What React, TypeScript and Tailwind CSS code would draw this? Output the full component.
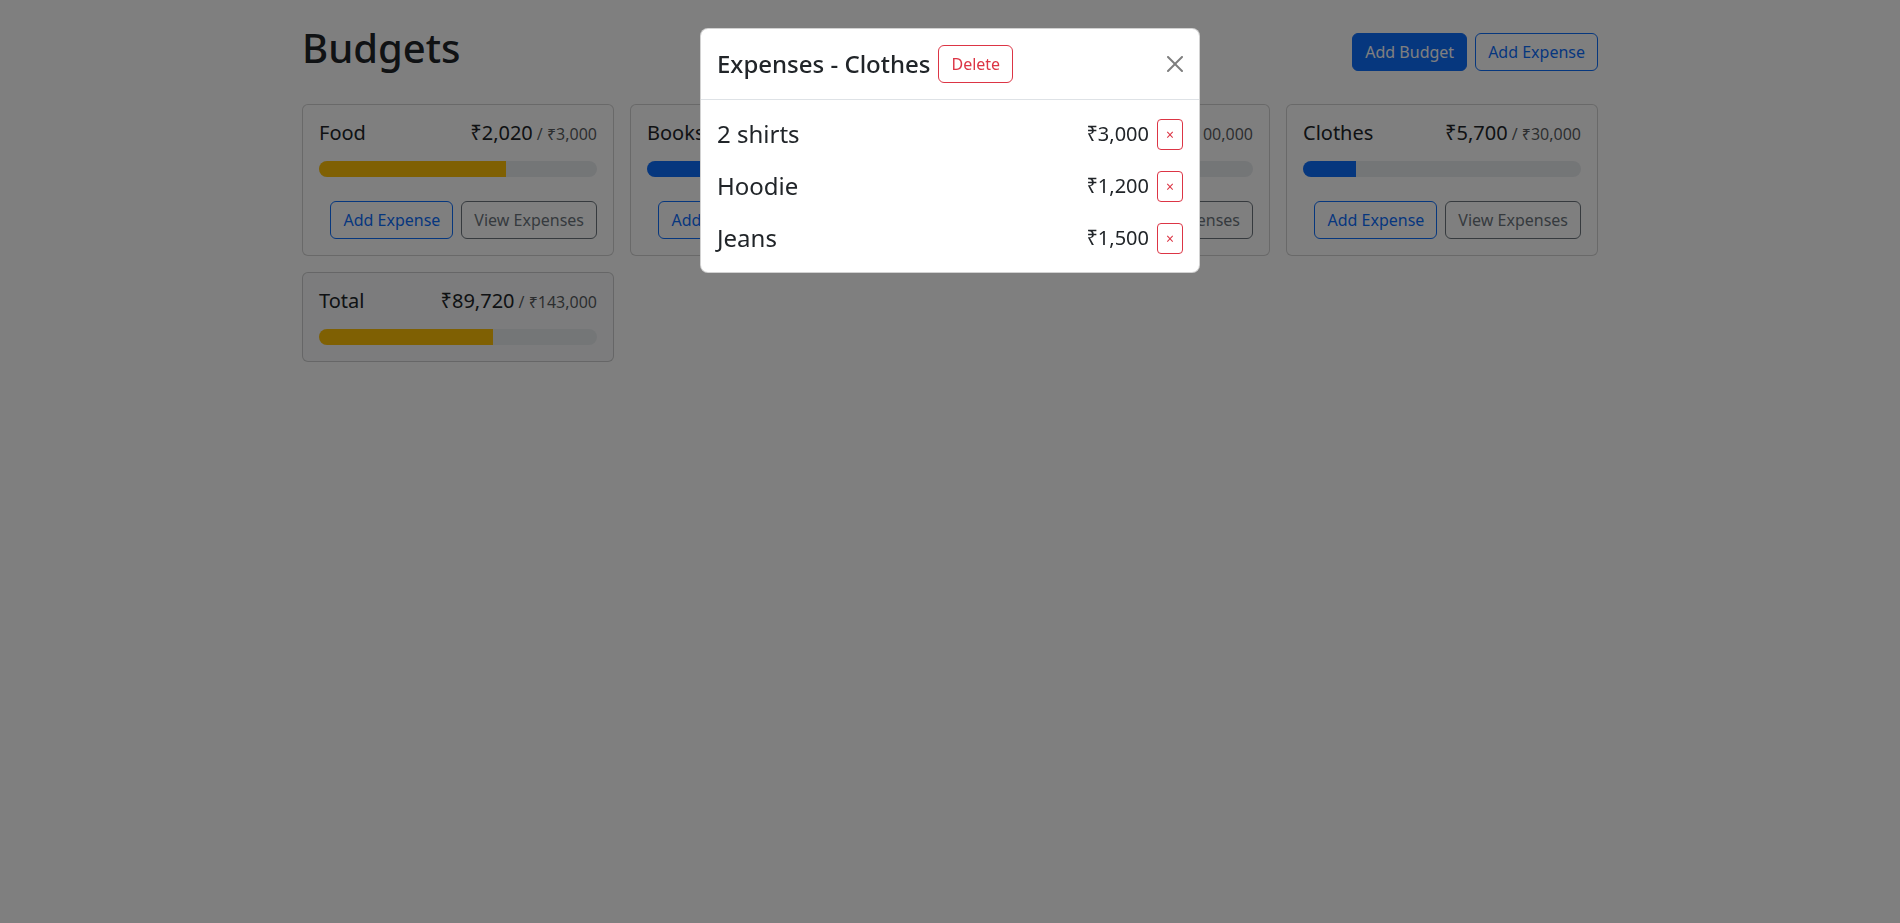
import React from 'react';

type Variant = 'primary' | 'warning' | 'danger';

type Budget = {
  name: string;
  amount: string;
  max: string;
  pct: number;
  variant: Variant;
};

const budgets: Budget[] = [
  { name: 'Food', amount: '₹2,020', max: '₹3,000', pct: 67.33, variant: 'warning' },
  { name: 'Books', amount: '₹4,500', max: '₹10,000', pct: 45, variant: 'primary' },
  { name: 'Rent', amount: '₹77,500', max: '₹100,000', pct: 77.5, variant: 'danger' },
  { name: 'Clothes', amount: '₹5,700', max: '₹30,000', pct: 19, variant: 'primary' },
];

const total: Budget = { name: 'Total', amount: '₹89,720', max: '₹143,000', pct: 62.74, variant: 'warning' };

const expenses = [
  { id: 1, description: '2 shirts', amount: '₹3,000' },
  { id: 2, description: 'Hoodie', amount: '₹1,200' },
  { id: 3, description: 'Jeans', amount: '₹1,500' },
];

const barColor: Record<Variant, string> = {
  primary: 'bg-[#0d6efd]',
  warning: 'bg-[#ffc107]',
  danger: 'bg-[#dc3545]',
};

const BudgetCard: React.FC<{ budget: Budget; gray?: boolean; hideButtons?: boolean }> = ({
  budget,
  gray,
  hideButtons,
}) => {
  return (
    <div className={`rounded-[6px] border border-black/[0.175] ${gray ? 'bg-[#f8f9fa]' : 'bg-white'}`}>
      <div className="p-4">
        {/* Title */}
        <div className="mb-4 flex items-baseline justify-between text-[20px] leading-[1.2]">
          <div className="mr-2">{budget.name}</div>
          <div className="flex items-baseline">
            {budget.amount}
            <span className="ml-1 text-base leading-[1.2] text-[#212529]/75">/ {budget.max}</span>
          </div>
        </div>

        {/* Progress */}
        <div className="flex h-4 overflow-hidden rounded-full bg-[#e9ecef]">
          <div className={barColor[budget.variant]} style={{ width: `${budget.pct}%` }} />
        </div>

        {!hideButtons && (
          <div className="mt-6 flex items-center gap-2">
            <button className="ml-auto rounded-[6px] border border-[#0d6efd] px-3 py-1.5 text-base leading-6 text-[#0d6efd]">
              Add Expense
            </button>
            <button className="rounded-[6px] border border-[#6c757d] px-3 py-1.5 text-base leading-6 text-[#6c757d]">
              View Expenses
            </button>
          </div>
        )}
      </div>
    </div>
  );
};

const App: React.FC = () => {
  return (
    <div className="relative min-h-screen bg-white font-['Noto_Sans',sans-serif] text-[#212529]">
      <div className="mx-auto w-[1320px] px-3 pt-6">
        {/* Header */}
        <div className="mb-6 flex items-center gap-2">
          <h1 className="mb-2 mr-auto text-[40px] font-medium leading-[1.2]">Budgets</h1>
          <button className="rounded-[6px] border border-[#0d6efd] bg-[#0d6efd] px-3 py-1.5 text-base leading-6 text-white">
            Add Budget
          </button>
          <button className="rounded-[6px] border border-[#0d6efd] px-3 py-1.5 text-base leading-6 text-[#0d6efd]">
            Add Expense
          </button>
        </div>

        {/* Cards */}
        <div className="grid grid-cols-4 items-start gap-4">
          {budgets.map((b) => (
            <BudgetCard key={b.name} budget={b} />
          ))}
          <BudgetCard budget={total} gray hideButtons />
        </div>
      </div>

      {/* Backdrop */}
      <div className="fixed inset-0 bg-black/50" />

      {/* Modal */}
      <div className="fixed inset-0">
        <div className="mx-auto mt-7 w-[500px] rounded-lg border border-black/[0.175] bg-white">
          <div className="flex items-center border-b border-[#dee2e6] p-4">
            <div className="flex items-center gap-2 text-2xl font-medium leading-normal">
              <div>Expenses - Clothes</div>
              <button className="rounded-[6px] border border-[#dc3545] px-3 py-1.5 text-base font-normal leading-6 text-[#dc3545]">
                Delete
              </button>
            </div>
            <button className="-m-2 ml-auto p-2 opacity-50" aria-label="Close">
              <svg viewBox="0 0 16 16" className="h-4 w-4" fill="#000">
                <path d="M.293.293a1 1 0 0 1 1.414 0L8 6.586 14.293.293a1 1 0 1 1 1.414 1.414L9.414 8l6.293 6.293a1 1 0 0 1-1.414 1.414L8 9.414l-6.293 6.293a1 1 0 0 1-1.414-1.414L6.586 8 .293 1.707a1 1 0 0 1 0-1.414z" />
              </svg>
            </button>
          </div>

          <div className="flex flex-col gap-4 p-4">
            {expenses.map((e) => (
              <div key={e.id} className="flex items-center gap-2">
                <div className="mr-auto text-2xl leading-normal">{e.description}</div>
                <div className="text-[20px] leading-normal">{e.amount}</div>
                <button className="rounded-[4px] border border-[#dc3545] px-2 py-1 text-sm leading-normal text-[#dc3545]">
                  ×
                </button>
              </div>
            ))}
          </div>
        </div>
      </div>
    </div>
  );
};

export default App;
